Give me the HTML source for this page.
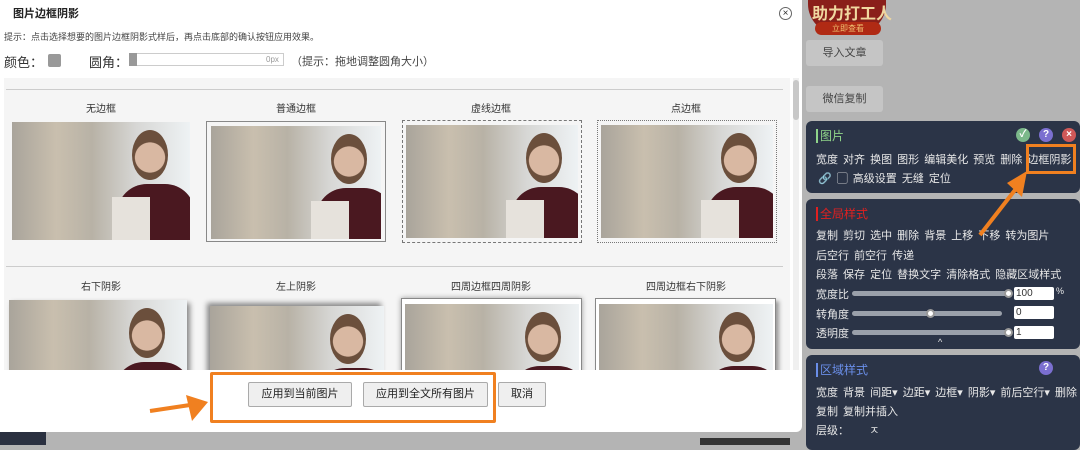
<!DOCTYPE html>
<html><head><meta charset="utf-8"><style>
*{box-sizing:border-box;margin:0;padding:0}
body{width:1080px;height:445px;overflow:hidden;background:#b4b4b4;font-family:"Liberation Sans","Noto Sans CJK SC",sans-serif;position:relative}
.abs{position:absolute}
.dlg{left:0;top:0;width:802px;height:432px;background:#fff;border-radius:0 0 6px 0}
.sec{left:4px;top:78px;width:786px;height:292px;background:#f5f5f5;overflow:hidden}
.lbl{font-size:10px;color:#333;text-align:center;width:178px}
.ph{width:178px;height:118px;overflow:hidden;background:linear-gradient(90deg,#a9a49b 0%,#c9bfae 25%,#b8b2a6 45%,#d7d7d5 70%,#eef2f4 100%)}
.ph:before{content:"";position:absolute;left:105px;top:62px;width:78px;height:70px;background:#4a1820;border-radius:30px 30px 0 0}
.ph:after{content:"";position:absolute;left:120px;top:8px;width:36px;height:50px;background:radial-gradient(circle at 50% 55%,#d9b8a2 0 45%,#6b4f3c 47% 100%);border-radius:50%}
.bag{position:absolute;left:100px;top:75px;width:38px;height:45px;background:#e6e2dc}
.btn{height:25px;border:1px solid #aaa;background:#efefef;font-size:11px;color:#222;text-align:center;line-height:23px;border-radius:2px}
.pan{left:806px;width:274px;background:#2b3447;border-radius:6px;color:#e8e8e8;font-size:11px}
.row{position:absolute;left:10px;white-space:nowrap;word-spacing:2px}
.sl{position:absolute;height:5px;background:#9aa0aa;border-radius:3px}
.knob{position:absolute;width:9px;height:9px;background:#fff;border-radius:50%;border:2px solid #999}
.inp{position:absolute;width:40px;height:13px;background:#fff;border-radius:2px;color:#333;font-size:10px;padding-left:2px;line-height:13px}
.ico{position:absolute;width:14px;height:14px;border-radius:50%;color:#fff;font-size:10px;text-align:center;line-height:14px;font-weight:bold}
</style></head><body>
<div class="abs" style="left:808px;top:0;width:78px;height:34px;background:#8a1f1a;border-radius:0 0 30px 30px"></div>
<div class="abs" style="left:812px;top:0;font-size:16px;font-weight:bold;color:#f0d8a0">助力打工人</div>
<div class="abs" style="left:815px;top:22px;width:66px;height:13px;background:#b02a14;border-radius:7px;font-size:8px;color:#f0c070;text-align:center;line-height:13px">立即查看</div>
<div class="abs" style="left:806px;top:40px;width:77px;height:26px;background:#c5c5c5;border-radius:3px;font-size:11px;color:#444;text-align:center;line-height:26px">导入文章</div>
<div class="abs" style="left:806px;top:86px;width:77px;height:26px;background:#c5c5c5;border-radius:3px;font-size:11px;color:#444;text-align:center;line-height:26px">微信复制</div>
<div class="abs" style="left:0;top:432px;width:46px;height:13px;background:#2a3040"></div>
<div class="abs" style="left:700px;top:438px;width:90px;height:7px;background:#333"></div>

<div class="abs pan" style="top:121px;height:72px">
 <div class="row" style="top:6px;color:#8fd48a;font-size:12px"><span style="border-left:2px solid #8fd48a;padding-left:2px">图片</span></div>
 <div class="ico" style="left:210px;top:7px;background:#7bb88a">✓</div>
 <div class="ico" style="left:233px;top:7px;background:#7b6fd0">?</div>
 <div class="ico" style="left:256px;top:7px;background:#d05858">×</div>
 <div class="row" style="top:30px">宽度 对齐 换图 图形 编辑美化 预览 删除 边框阴影</div>
 <div class="row" style="top:49px;left:12px">🔗 ▢ 高级设置 无缝 定位</div>
</div>
<div class="abs pan" style="top:199px;height:150px">
 <div class="row" style="top:6px;color:#e02020;font-size:12px"><span style="border-left:2px solid #e02020;padding-left:2px">全局样式</span></div>
 <div class="row" style="top:28px">复制 剪切 选中 删除 背景 上移 下移 转为图片</div>
 <div class="row" style="top:48px">后空行 前空行 传递</div>
 <div class="row" style="top:67px">段落 保存 定位 替换文字 清除格式 隐藏区域样式</div>
 <div class="row" style="top:87px">宽度比</div><div class="sl" style="left:46px;top:92px;width:160px"></div><div class="knob" style="left:198px;top:90px"></div><div class="inp" style="left:208px;top:88px">100</div><div class="row" style="left:250px;top:87px;font-size:9px">%</div>
 <div class="row" style="top:107px">转角度</div><div class="sl" style="left:46px;top:112px;width:150px"></div><div class="knob" style="left:120px;top:110px"></div><div class="inp" style="left:208px;top:107px">0</div>
 <div class="row" style="top:126px">透明度</div><div class="sl" style="left:46px;top:131px;width:160px"></div><div class="knob" style="left:198px;top:129px"></div><div class="inp" style="left:208px;top:127px">1</div>
 <div class="row" style="top:138px;left:132px;font-size:9px">^</div>
</div>
<div class="abs pan" style="top:355px;height:95px">
 <div class="row" style="top:6px;color:#6a8ee8;font-size:12px"><span style="border-left:2px solid #6a8ee8;padding-left:2px">区域样式</span></div>
 <div class="ico" style="left:233px;top:6px;background:#7b6fd0">?</div>
 <div class="row" style="top:29px">宽度 背景 间距▾ 边距▾ 边框▾ 阴影▾ 前后空行▾ 删除</div>
 <div class="row" style="top:48px">复制 复制并插入</div>
 <div class="row" style="top:67px">层级：&nbsp;&nbsp;&nbsp;&nbsp;ㅈ</div>
</div>
<div class="abs" style="left:1026px;top:144px;width:50px;height:30px;border:3px solid #f08020"></div>
<svg class="abs" style="left:975px;top:165px" width="60" height="75"><path d="M5 70 L40 25" stroke="#f08020" stroke-width="4"/><path d="M32 18 L52 6 L47 32 Z" fill="#f08020"/></svg>

<div class="abs dlg">
 <div class="abs" style="left:13px;top:5px;font-size:11px;font-weight:bold;color:#222">图片边框阴影</div>
 <div class="abs" style="left:779px;top:7px;width:13px;height:13px;border:1px solid #666;border-radius:50%;font-size:10px;text-align:center;line-height:11px;color:#333">×</div>
 <div class="abs" style="left:4px;top:30px;font-size:9px;color:#444">提示：点击选择想要的图片边框阴影式样后，再点击底部的确认按钮应用效果。</div>
 <div class="abs" style="left:4px;top:52px;font-size:13px;color:#333">颜色：</div>
 <div class="abs" style="left:48px;top:54px;width:13px;height:13px;background:#999;border-radius:2px"></div>
 <div class="abs" style="left:89px;top:52px;font-size:13px;color:#333">圆角：</div>
 <div class="abs" style="left:129px;top:53px;width:155px;height:13px;border:1px solid #ccc"></div>
 <div class="abs" style="left:129px;top:53px;width:8px;height:13px;background:#999"></div>
 <div class="abs" style="left:266px;top:55px;font-size:8px;color:#999">0px</div>
 <div class="abs" style="left:291px;top:53px;font-size:11px;color:#444">（提示：拖地调整圆角大小）</div>
 <div class="abs sec">
  <div class="abs" style="left:2px;top:11px;width:777px;height:1px;background:#ccc"></div>
  <div class="abs lbl" style="left:8px;top:22px">无边框</div>
  <div class="abs lbl" style="left:203px;top:22px">普通边框</div>
  <div class="abs lbl" style="left:398px;top:22px">虚线边框</div>
  <div class="abs lbl" style="left:593px;top:22px">点边框</div>
  <div class="abs ph" style="left:8px;top:44px"><div class="bag"></div></div>
  <div class="abs" style="left:202px;top:43px;width:180px;height:121px;border:1px solid #888"></div>
  <div class="abs ph" style="left:207px;top:48px;height:113px;width:170px"><div class="bag"></div></div>
  <div class="abs" style="left:398px;top:42px;width:180px;height:123px;border:1px dashed #777"></div>
  <div class="abs ph" style="left:402px;top:47px;height:113px;width:172px"><div class="bag"></div></div>
  <div class="abs" style="left:593px;top:42px;width:180px;height:123px;border:1px dotted #777"></div>
  <div class="abs ph" style="left:597px;top:47px;height:113px;width:172px"><div class="bag"></div></div>
  <div class="abs" style="left:2px;top:188px;width:777px;height:1px;background:#ccc"></div>
  <div class="abs lbl" style="left:8px;top:200px">右下阴影</div>
  <div class="abs lbl" style="left:203px;top:200px">左上阴影</div>
  <div class="abs lbl" style="left:398px;top:200px">四周边框四周阴影</div>
  <div class="abs lbl" style="left:593px;top:200px">四周边框右下阴影</div>
  <div class="abs ph" style="left:5px;top:222px;box-shadow:3px 3px 5px #888"><div class="bag"></div></div>
  <div class="abs ph" style="left:206px;top:228px;width:174px;box-shadow:-3px -3px 5px #888"><div class="bag"></div></div>
  <div class="abs" style="left:397px;top:220px;width:181px;height:80px;border:1px solid #888;box-shadow:0 0 5px #999;background:#fff"></div>
  <div class="abs ph" style="left:401px;top:226px;width:174px"><div class="bag"></div></div>
  <div class="abs" style="left:591px;top:220px;width:181px;height:80px;border:1px solid #888;box-shadow:3px 3px 4px #999;background:#fff"></div>
  <div class="abs ph" style="left:595px;top:226px;width:174px"><div class="bag"></div></div>
 </div>
 <div class="abs" style="left:793px;top:78px;width:6px;height:292px;background:#f0f0f0"></div>
 <div class="abs" style="left:793px;top:80px;width:6px;height:40px;background:#c8c8c8;border-radius:3px"></div>
 <div class="abs btn" style="left:248px;top:382px;width:104px">应用到当前图片</div>
 <div class="abs btn" style="left:363px;top:382px;width:125px">应用到全文所有图片</div>
 <div class="abs btn" style="left:498px;top:382px;width:48px">取消</div>
 <div class="abs" style="left:210px;top:372px;width:286px;height:51px;border:3px solid #f08020;border-radius:2px"></div>
 <svg class="abs" style="left:148px;top:395px" width="62" height="30"><path d="M2 16 L42 10" stroke="#f08020" stroke-width="4"/><path d="M38 0 L60 7 L44 26 Z" fill="#f08020"/></svg>
</div>
</body></html>
